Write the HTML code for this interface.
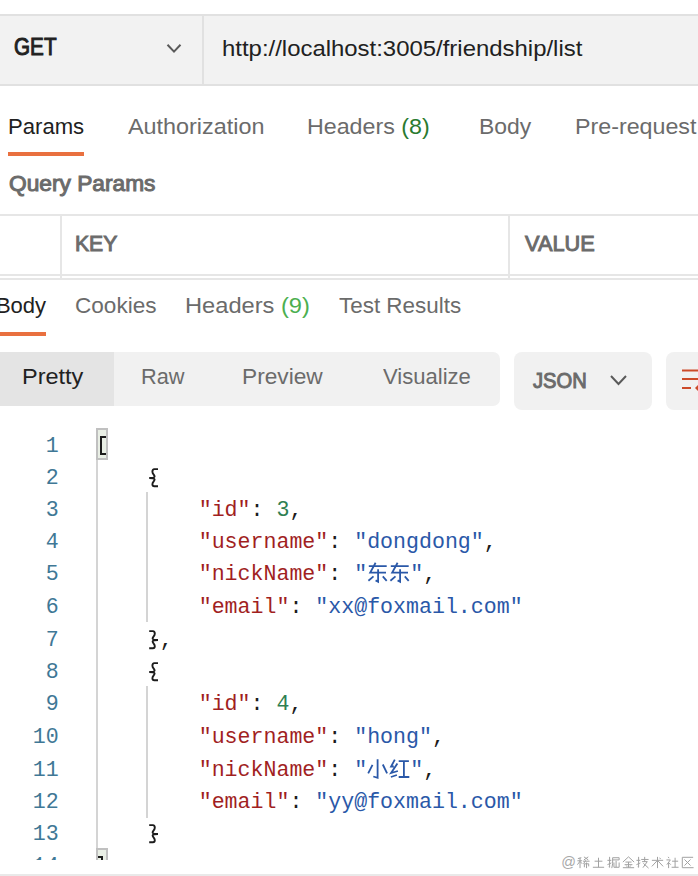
<!DOCTYPE html>
<html><head><meta charset="utf-8"><style>
html,body{margin:0;padding:0;background:#fff;width:698px;height:876px;overflow:hidden;position:relative}
.t{position:absolute;font-family:"Liberation Sans", sans-serif;line-height:1;white-space:pre;transform-origin:0 0}
.bx{position:absolute;box-sizing:border-box}
.ln{position:absolute;right:639.4px;font-family:"Liberation Mono",monospace;font-size:21.6px;line-height:1;color:#3f7896;white-space:pre}
.cl{position:absolute;left:95.0px;font-family:"Liberation Mono",monospace;font-size:21.6px;line-height:1;color:#1c1c1c;white-space:pre}
.k{color:#a11f1f} .s{color:#2a58a8} .n{color:#2f7f52} .p{color:#1c1c1c}
.cj{display:inline-block;width:43.2px;height:0}
.cs{position:absolute;overflow:visible}
#clip{position:absolute;left:0;top:420px;width:698px;height:440px;overflow:hidden}
</style></head><body>
<!-- top bar -->
<div class="bx" style="left:0;top:14px;width:698px;height:72px;background:#f2f2f2;border-top:2px solid #e1e1e1;border-bottom:2px solid #e1e1e1"></div>
<div class="bx" style="left:202px;top:16px;width:2px;height:68px;background:#e1e1e1"></div>
<svg class="bx" style="left:160px;top:38px" width="28" height="22" viewBox="0 0 28 22"><polyline points="7.5,6.8 14,13.6 20.5,6.8" fill="none" stroke="#5a5a5a" stroke-width="2"/></svg>
<!-- request tab underline -->
<div class="bx" style="left:8px;top:152px;width:76px;height:4px;background:#e9703f"></div>
<!-- table lines -->
<div class="bx" style="left:0;top:214px;width:698px;height:2px;background:#e6e6e6"></div>
<div class="bx" style="left:60px;top:216px;width:2px;height:62px;background:#e6e6e6"></div>
<div class="bx" style="left:508px;top:216px;width:2px;height:62px;background:#e6e6e6"></div>
<div class="bx" style="left:0;top:274px;width:698px;height:2px;background:#e6e6e6"></div>
<div class="bx" style="left:0;top:278px;width:698px;height:2px;background:#e6e6e6"></div>
<!-- response tab underline -->
<div class="bx" style="left:0;top:332px;width:46px;height:4px;background:#e9703f"></div>
<!-- segmented -->
<div class="bx" style="left:-10px;top:352px;width:510px;height:54px;background:#f1f1f1;border-radius:7px"></div>
<div class="bx" style="left:0;top:352px;width:114px;height:54px;background:#e4e4e4"></div>
<div class="bx" style="left:514px;top:352px;width:138px;height:58px;background:#f1f1f1;border-radius:8px"></div>
<svg class="bx" style="left:604px;top:370px" width="30" height="20" viewBox="0 0 30 20"><polyline points="7,6 14.5,14 22,6" fill="none" stroke="#5a5a5a" stroke-width="2"/></svg>
<div class="bx" style="left:666px;top:352px;width:60px;height:58px;background:#f1f1f1;border-radius:8px"></div>
<svg class="bx" style="left:676px;top:360px" width="22" height="40" viewBox="0 0 22 40"><g fill="none" stroke="#cc4b2a" stroke-width="2"><line x1="6" y1="10.5" x2="22" y2="10.5"/><line x1="6" y1="19" x2="22" y2="19"/><line x1="6" y1="28" x2="15" y2="28"/></g><path d="M19 28 L23 24 L23 32 Z" fill="#cc4b2a"/></svg>
<div class='t' style='left:14.16px;top:35.26px;font-weight:400;-webkit-text-stroke:1.0px #212121;font-size:24.638px;color:#212121;transform:scaleX(0.8400)'>GET</div>
<div class='t' style='left:222.38px;top:37.78px;font-weight:400;font-size:22.609px;color:#212121;transform:scaleX(1.0586)'>http://localhost:3005/friendship/list</div>
<div class='t' style='left:8.03px;top:116.11px;font-weight:400;font-size:22.464px;color:#212121;transform:scaleX(0.9840)'>Params</div>
<div class='t' style='left:128.30px;top:116.11px;font-weight:400;font-size:22.464px;color:#6b6b6b;transform:scaleX(1.0408)'>Authorization</div>
<div class='t' style='left:306.93px;top:116.11px;font-weight:400;font-size:22.464px;color:#6b6b6b;transform:scaleX(1.0348)'>Headers <span style="color:#2a7a2f">(8)</span></div>
<div class='t' style='left:479.36px;top:116.11px;font-weight:400;font-size:22.464px;color:#6b6b6b;transform:scaleX(1.0204)'>Body</div>
<div class='t' style='left:575.13px;top:116.11px;font-weight:400;font-size:22.464px;color:#6b6b6b;transform:scaleX(1.0350)'>Pre-request Script</div>
<div class='t' style='left:8.75px;top:173.12px;font-weight:400;-webkit-text-stroke:1.0px #6b6b6b;font-size:21.739px;color:#6b6b6b;transform:scaleX(1.0460)'>Query Params</div>
<div class='t' style='left:75.04px;top:233.28px;font-weight:400;-webkit-text-stroke:1.0px #6b6b6b;font-size:22.029px;color:#6b6b6b;transform:scaleX(0.9605)'>KEY</div>
<div class='t' style='left:525.20px;top:233.38px;font-weight:400;-webkit-text-stroke:1.0px #6b6b6b;font-size:22.029px;color:#6b6b6b;transform:scaleX(0.9871)'>VALUE</div>
<div class='t' style='left:-4.10px;top:294.88px;font-weight:400;font-size:22.029px;color:#212121;transform:scaleX(1.0000)'>Body</div>
<div class='t' style='left:75.27px;top:294.88px;font-weight:400;font-size:22.029px;color:#6b6b6b;transform:scaleX(1.0256)'>Cookies</div>
<div class='t' style='left:185.15px;top:294.88px;font-weight:400;font-size:22.029px;color:#6b6b6b;transform:scaleX(1.0741)'>Headers <span style="color:#4caf50">(9)</span></div>
<div class='t' style='left:339.00px;top:294.88px;font-weight:400;font-size:22.029px;color:#6b6b6b;transform:scaleX(1.0185)'>Test Results</div>
<div class='t' style='left:22.11px;top:366.11px;font-weight:400;font-size:22.464px;color:#212121;transform:scaleX(1.0456)'>Pretty</div>
<div class='t' style='left:141.47px;top:366.11px;font-weight:400;font-size:22.464px;color:#6b6b6b;transform:scaleX(0.9674)'>Raw</div>
<div class='t' style='left:242.28px;top:366.11px;font-weight:400;font-size:22.464px;color:#6b6b6b;transform:scaleX(1.0103)'>Preview</div>
<div class='t' style='left:383.30px;top:366.11px;font-weight:400;font-size:22.464px;color:#6b6b6b;transform:scaleX(0.9820)'>Visualize</div>
<div class='t' style='left:533.00px;top:369.72px;font-weight:400;-webkit-text-stroke:1.0px #6b6b6b;font-size:21.739px;color:#6b6b6b;transform:scaleX(0.9298)'>JSON</div>
<!-- code -->
<div id="clip">
<div style="position:absolute;left:0;top:-420px;width:698px;height:876px">
<div class="bx" style="left:96px;top:428px;width:12px;height:32px;background:#e9efe5;border:2px solid #c0c0c0"></div>
<div class="bx" style="left:100.3px;top:436px;width:2px;height:19px;background:#1c1c1c"></div>
<div class="bx" style="left:100.3px;top:436px;width:5.7px;height:2px;background:#1c1c1c"></div>
<div class="bx" style="left:100.3px;top:453px;width:5.7px;height:2px;background:#1c1c1c"></div>
<div class="bx" style="left:96px;top:460px;width:2px;height:388px;background:#d4d4d4"></div>
<div class="bx" style="left:96px;top:848px;width:12px;height:32px;background:#e9efe5;border:2px solid #c0c0c0"></div>
<div class="bx" style="left:97.5px;top:856px;width:5.5px;height:2px;background:#1c1c1c"></div>
<div class="bx" style="left:101px;top:856px;width:2px;height:6px;background:#1c1c1c"></div>
<div class="bx" style="left:146px;top:492px;width:2px;height:130px;background:#d4d4d4"></div>
<div class="bx" style="left:146px;top:686px;width:2px;height:131.5px;background:#d4d4d4"></div>
<div class='ln' style='top:435.94px'>1</div>
<div class='cl' style='top:435.94px'></div>
<div class='ln' style='top:467.94px'>2</div>
<div class='cl' style='top:467.94px'></div>
<div class='ln' style='top:499.94px'>3</div>
<div class='cl' style='top:499.94px'>        <span class="k">"id"</span><span class="p">: </span><span class="n">3</span><span class="p">,</span></div>
<div class='ln' style='top:531.94px'>4</div>
<div class='cl' style='top:531.94px'>        <span class="k">"username"</span><span class="p">: </span><span class="s">"dongdong"</span><span class="p">,</span></div>
<div class='ln' style='top:563.94px'>5</div>
<div class='cl' style='top:563.94px'>        <span class="k">"nickName"</span><span class="p">: </span><span class="s">"<span class="cj"></span>"</span><span class="p">,</span></div>
<div class='ln' style='top:596.94px'>6</div>
<div class='cl' style='top:596.94px'>        <span class="k">"email"</span><span class="p">: </span><span class="s">"xx@foxmail.com"</span></div>
<div class='ln' style='top:629.94px'>7</div>
<div class='cl' style='top:629.94px'>     <span class="p">,</span></div>
<div class='ln' style='top:661.94px'>8</div>
<div class='cl' style='top:661.94px'></div>
<div class='ln' style='top:693.94px'>9</div>
<div class='cl' style='top:693.94px'>        <span class="k">"id"</span><span class="p">: </span><span class="n">4</span><span class="p">,</span></div>
<div class='ln' style='top:726.94px'>10</div>
<div class='cl' style='top:726.94px'>        <span class="k">"username"</span><span class="p">: </span><span class="s">"hong"</span><span class="p">,</span></div>
<div class='ln' style='top:759.94px'>11</div>
<div class='cl' style='top:759.94px'>        <span class="k">"nickName"</span><span class="p">: </span><span class="s">"<span class="cj"></span>"</span><span class="p">,</span></div>
<div class='ln' style='top:791.94px'>12</div>
<div class='cl' style='top:791.94px'>        <span class="k">"email"</span><span class="p">: </span><span class="s">"yy@foxmail.com"</span></div>
<div class='ln' style='top:823.94px'>13</div>
<div class='cl' style='top:823.94px'></div>
<div class='ln' style='top:855.94px'>14</div>
<div class='cl' style='top:855.94px'><span class="p"> </span></div>
<svg class='cs' style='left:146px;top:464.50px' width='16' height='24' viewBox='0 0 16 24'><path d='M12,4.1 H8.3 C6.9,4.1 6.4,4.9 6.4,6.8 C6.4,9.2 8.6,10 8.6,11.5 C8.6,12.5 7.3,13 3.2,13 C7.3,13 8.6,13.5 8.6,14.5 C8.6,16 6.4,16.8 6.4,19.2 C6.4,20.9 6.9,21.3 8.3,21.3 H12' fill='none' stroke='#1c1c1c' stroke-width='1.9'/></svg>
<svg class='cs' style='left:146px;top:626.50px' width='16' height='24' viewBox='0 0 16 24'><path d='M3.2,4.1 H6.9 C8.3,4.1 8.8,4.9 8.8,6.8 C8.8,9.2 6.6,10 6.6,11.5 C6.6,12.5 7.9,13 12,13 C7.9,13 6.6,13.5 6.6,14.5 C6.6,16 8.8,16.8 8.8,19.2 C8.8,20.9 8.3,21.3 6.9,21.3 H3.2' fill='none' stroke='#1c1c1c' stroke-width='1.9'/></svg>
<svg class='cs' style='left:146px;top:658.50px' width='16' height='24' viewBox='0 0 16 24'><path d='M12,4.1 H8.3 C6.9,4.1 6.4,4.9 6.4,6.8 C6.4,9.2 8.6,10 8.6,11.5 C8.6,12.5 7.3,13 3.2,13 C7.3,13 8.6,13.5 8.6,14.5 C8.6,16 6.4,16.8 6.4,19.2 C6.4,20.9 6.9,21.3 8.3,21.3 H12' fill='none' stroke='#1c1c1c' stroke-width='1.9'/></svg>
<svg class='cs' style='left:146px;top:820.50px' width='16' height='24' viewBox='0 0 16 24'><path d='M3.2,4.1 H6.9 C8.3,4.1 8.8,4.9 8.8,6.8 C8.8,9.2 6.6,10 6.6,11.5 C6.6,12.5 7.9,13 12,13 C7.9,13 6.6,13.5 6.6,14.5 C6.6,16 8.8,16.8 8.8,19.2 C8.8,20.9 8.3,21.3 6.9,21.3 H3.2' fill='none' stroke='#1c1c1c' stroke-width='1.9'/></svg>
<svg class='cs' style='left:367px;top:560.50px' width='22' height='24' viewBox='0 0 22 24'><path d='M1.8,5.1 H19.7 M8.6,1.8 L3.2,11.6 H19 M11.1,8.2 V20.8 L8.6,19.4 M6.5,15.4 L1.4,19.7 M15.8,15.4 L19.7,19.9' fill='none' stroke='#2a58a8' stroke-width='1.8' stroke-linecap='butt' stroke-linejoin='miter'/></svg>
<svg class='cs' style='left:388.6px;top:560.50px' width='22' height='24' viewBox='0 0 22 24'><path d='M1.8,5.1 H19.7 M8.6,1.8 L3.2,11.6 H19 M11.1,8.2 V20.8 L8.6,19.4 M6.5,15.4 L1.4,19.7 M15.8,15.4 L19.7,19.9' fill='none' stroke='#2a58a8' stroke-width='1.8' stroke-linecap='butt' stroke-linejoin='miter'/></svg>
<svg class='cs' style='left:367px;top:756.50px' width='22' height='24' viewBox='0 0 22 24'><path d='M10.6,2.3 V20.8 L6.3,19.5 M5.5,7.9 L1.2,16.4 M15.8,7.5 L20.1,16.4' fill='none' stroke='#2a58a8' stroke-width='1.8' stroke-linecap='butt' stroke-linejoin='miter'/></svg>
<svg class='cs' style='left:388.6px;top:756.50px' width='22' height='24' viewBox='0 0 22 24'><path d='M5.8,2.6 L2.1,9.5 L4.8,9.5 M8.4,6.5 L2.1,16.0 L8.9,14.0 M1.9,20.0 L7.9,18.0 M9.7,4.1 H19.9 M14.9,4.1 V20.0 M9.7,20.0 H20.3' fill='none' stroke='#2a58a8' stroke-width='1.8' stroke-linecap='butt' stroke-linejoin='miter'/></svg>
</div></div>
<div class="t" style="left:561.3px;top:854.6px;font-size:14.5px;color:#a8a8a8">@</div>
<svg class='cs' style='left:577.00px;top:856.3px' width='13' height='13' viewBox='0 0 15 15'><path d='M1,3 L5,2 M0.5,5.5 H6 M3.5,2 V14 M3.5,6 L0.5,10 M3.8,6.5 L6,9 M8,1 L13,4.5 M13,1 L8,4.5 M7,6 H14.5 M10,5 L7.5,9 M8.5,9 V13 M8.5,9 H13.5 V12 M11,7.5 V14' fill='none' stroke='#a2a2a2' stroke-width='1.15'/></svg>
<svg class='cs' style='left:591.85px;top:856.3px' width='13' height='13' viewBox='0 0 15 15'><path d='M3,6 H12 M7.5,2 V13 M1,13 H14' fill='none' stroke='#a2a2a2' stroke-width='1.15'/></svg>
<svg class='cs' style='left:606.70px;top:856.3px' width='13' height='13' viewBox='0 0 15 15'><path d='M0.5,5 H5 M3,1 V13 L2,12.5 M0.5,10 L5,8 M6.5,2 H14 V4.5 H6.5 M6.5,2 V9 L5.5,14 M10.5,5.5 V13 M8,7.5 V13 H14 V7.5' fill='none' stroke='#a2a2a2' stroke-width='1.15'/></svg>
<svg class='cs' style='left:621.55px;top:856.3px' width='13' height='13' viewBox='0 0 15 15'><path d='M7.5,1 L1,7 M7.5,1 L14,7 M4,7 H11 M3,10 H12 M7.5,7 V13.5 M5,11 L6,12.5 M10,11 L9,12.5 M1,13.5 H14' fill='none' stroke='#a2a2a2' stroke-width='1.15'/></svg>
<svg class='cs' style='left:636.40px;top:856.3px' width='13' height='13' viewBox='0 0 15 15'><path d='M0.5,5 H5 M3,1 V13 L2,12.5 M0.5,10 L5,8 M6,4 H14.5 M10,1 V6.5 M7,6.5 H13 L8,13.5 M8.5,8.5 L14.5,14' fill='none' stroke='#a2a2a2' stroke-width='1.15'/></svg>
<svg class='cs' style='left:651.25px;top:856.3px' width='13' height='13' viewBox='0 0 15 15'><path d='M1,5 H14 M7.5,1 V14 M7,5.5 L1,12 M8,5.5 L14,12 M10,2 L11,3.5' fill='none' stroke='#a2a2a2' stroke-width='1.15'/></svg>
<svg class='cs' style='left:666.10px;top:856.3px' width='13' height='13' viewBox='0 0 15 15'><path d='M2.5,1 L3.5,2.5 M0.5,4.5 H5 L1,10 M3,7 V14 M3.5,8 L5.5,10 M7,6 H14 M10.5,2 V13 M6.5,13 H14.5' fill='none' stroke='#a2a2a2' stroke-width='1.15'/></svg>
<svg class='cs' style='left:680.95px;top:856.3px' width='13' height='13' viewBox='0 0 15 15'><path d='M1.5,1.5 H14 M1.5,1.5 V13.5 H14.5 M4,4 L11,11 M11,4 L4,11' fill='none' stroke='#a2a2a2' stroke-width='1.15'/></svg>
<div class="bx" style="left:0;top:874px;width:698px;height:2px;background:#e9e9e9"></div>
</body></html>
